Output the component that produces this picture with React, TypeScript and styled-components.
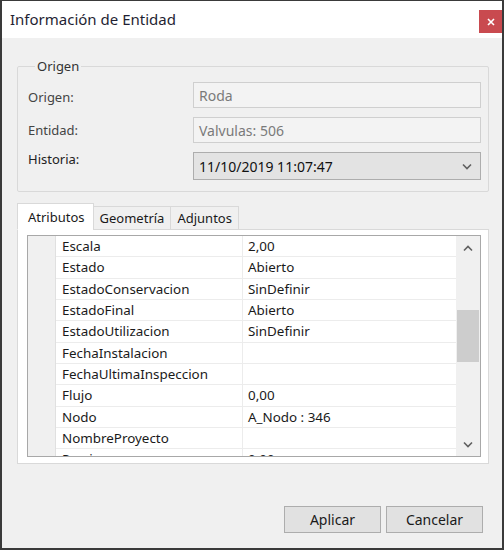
import styled, { createGlobalStyle } from 'styled-components';

const GlobalStyle = createGlobalStyle`
  html, body {
    margin: 0;
    padding: 0;
    background: #ffffff;
  }
  * {
    box-sizing: border-box;
  }
`;

interface Attribute {
  name: string;
  value: string;
}

const attributes: Attribute[] = [
  { name: 'Escala', value: '2,00' },
  { name: 'Estado', value: 'Abierto' },
  { name: 'EstadoConservacion', value: 'SinDefinir' },
  { name: 'EstadoFinal', value: 'Abierto' },
  { name: 'EstadoUtilizacion', value: 'SinDefinir' },
  { name: 'FechaInstalacion', value: '' },
  { name: 'FechaUltimaInspeccion', value: '' },
  { name: 'Flujo', value: '0,00' },
  { name: 'Nodo', value: 'A_Nodo : 346' },
  { name: 'NombreProyecto', value: '' },
  { name: 'Presion', value: '0,00' },
];

const tabs = ['Atributos', 'Geometría', 'Adjuntos'];

function Chevron({ up }: { up?: boolean }) {
  return (
    <svg width="10" height="7" viewBox="0 0 10 7">
      <path
        d={up ? 'M1 5.5 L5 1.5 L9 5.5' : 'M1 1.5 L5 5.5 L9 1.5'}
        fill="none"
        stroke="#606060"
        strokeWidth="1.6"
      />
    </svg>
  );
}

export default function App() {
  return (
    <>
      <GlobalStyle />
      <Window>
        <TitleBar>
          <Title>Información de Entidad</Title>
          <CloseButton>
            <svg width="8" height="8" viewBox="0 0 8 8">
              <path d="M1 1 L7 7 M7 1 L1 7" stroke="#fff" strokeWidth="1.6" />
            </svg>
          </CloseButton>
        </TitleBar>
        <Body>
          <Group>
            <Legend>Origen</Legend>
            <FormGrid>
              <Label $shift={2}>Origen:</Label>
              <TextBox>Roda</TextBox>
              <Label $shift={0}>Entidad:</Label>
              <TextBox>Valvulas: 506</TextBox>
              <Label $shift={-7} $strong>
                Historia:
              </Label>
              <Combo>
                <span>11/10/2019 11:07:47</span>
                <Chevron />
              </Combo>
            </FormGrid>
          </Group>

          <Tabs>
            <TabStrip>
              {tabs.map((t, i) => (
                <Tab key={t} $active={i === 0}>
                  {t}
                </Tab>
              ))}
            </TabStrip>
            <TabPanel>
              <GridView>
                <Rows>
                  {attributes.map((a) => (
                    <Row key={a.name}>
                      <RowHeader />
                      <NameCell>{a.name}</NameCell>
                      <ValueCell>{a.value}</ValueCell>
                    </Row>
                  ))}
                </Rows>
                <ScrollBar>
                  <ScrollArrow>
                    <Chevron up />
                  </ScrollArrow>
                  <ScrollTrack>
                    <Thumb />
                  </ScrollTrack>
                  <ScrollArrow>
                    <Chevron />
                  </ScrollArrow>
                </ScrollBar>
              </GridView>
            </TabPanel>
          </Tabs>

          <Buttons>
            <Button>Aplicar</Button>
            <Button>Cancelar</Button>
          </Buttons>
        </Body>
      </Window>
    </>
  );
}

const Window = styled.div`
  width: 504px;
  height: 550px;
  border: 2px solid #3a3a3a;
  border-top-width: 1px;
  display: flex;
  flex-direction: column;
  font-family: 'Noto Sans', 'Open Sans', sans-serif;
  font-size: 13px;
  color: #1a1a1a;
  overflow: hidden;
`;

const TitleBar = styled.div`
  height: 37px;
  flex-shrink: 0;
  background: #ffffff;
  display: flex;
  align-items: flex-start;
  justify-content: space-between;
`;

const Title = styled.div`
  padding: 8px 0 0 8px;
  font-size: 15px;
  color: #1f1f33;
`;

const CloseButton = styled.div`
  margin-top: 9px;
  width: 23px;
  height: 23px;
  background: #c94a4f;
  display: flex;
  align-items: center;
  justify-content: center;
`;

const Body = styled.div`
  flex: 1;
  background: #f0f0f0;
  display: flex;
  flex-direction: column;
  padding: 20px 13px 15px 15px;
`;

const Group = styled.fieldset`
  margin: 0;
  padding: 8px 7px 11px 10px;
  border: 1px solid #d9d9d9;
  border-radius: 2px;
`;

const Legend = styled.legend`
  padding: 0 2px;
  margin-left: 7px;
  line-height: 16px;
  color: #333;
`;

const FormGrid = styled.div`
  display: grid;
  grid-template-columns: 165px 1fr;
  row-gap: 9px;
  align-items: center;
`;

const Label = styled.div<{ $strong?: boolean; $shift: number }>`
  color: ${(p) => (p.$strong ? '#222' : '#444')};
  margin-top: ${(p) => p.$shift * 2}px;
`;

const TextBox = styled.div`
  height: 26px;
  border: 1px solid #cfcfcf;
  background: #f3f3f3;
  color: #7a7a7a;
  font-size: 14px;
  display: flex;
  align-items: center;
  padding-left: 5px;
`;

const Combo = styled.div`
  height: 28px;
  border: 1px solid #adadad;
  background: #e3e3e3;
  color: #111;
  font-size: 14px;
  display: flex;
  align-items: center;
  justify-content: space-between;
  padding: 0 8px 0 5px;
`;

const Tabs = styled.div`
  margin-top: 10px;
  display: flex;
  flex-direction: column;
`;

const TabStrip = styled.div`
  display: flex;
  align-items: flex-end;
  height: 27px;
  position: relative;
  z-index: 1;
`;

const Tab = styled.div<{ $active?: boolean }>`
  height: ${(p) => (p.$active ? '27px' : '24px')};
  padding: 0 ${(p) => (p.$active ? '8px' : '6px')} 0 ${(p) => (p.$active ? '10px' : '6px')};
  display: flex;
  align-items: center;
  background: ${(p) => (p.$active ? '#ffffff' : '#f0f0f0')};
  border: 1px solid #d9d9d9;
  border-bottom: ${(p) => (p.$active ? '1px solid #ffffff' : '1px solid #d9d9d9')};
  margin-left: ${(p) => (p.$active ? '0' : '-1px')};
  margin-bottom: -1px;
  color: #1a1a1a;
`;

const TabPanel = styled.div`
  height: 235px;
  background: #ffffff;
  border: 1px solid #d9d9d9;
  padding: 5px 7px 6px 9px;
`;

const GridView = styled.div`
  height: 100%;
  border: 1px solid #a8a8a8;
  display: flex;
  overflow: hidden;
`;

const Rows = styled.div`
  flex: 1;
  display: flex;
  flex-direction: column;
  overflow: hidden;
  font-size: 13.4px;
`;

const Row = styled.div`
  flex-shrink: 0;
  height: 21.33px;
  display: grid;
  grid-template-columns: 28px 187px 1fr;
`;

const RowHeader = styled.div`
  background: #f0f0f0;
  border-right: 1px solid #e0e0e0;
`;

const NameCell = styled.div`
  padding-left: 6px;
  line-height: 20px;
  border-bottom: 1px solid #ececec;
  border-right: 1px solid #ececec;
  white-space: nowrap;
`;

const ValueCell = styled.div`
  padding-left: 5px;
  line-height: 20px;
  border-bottom: 1px solid #ececec;
  white-space: nowrap;
`;

const ScrollBar = styled.div`
  width: 24px;
  flex-shrink: 0;
  background: #f0f0f0;
  display: flex;
  flex-direction: column;
`;

const ScrollArrow = styled.div`
  height: 24px;
  display: flex;
  align-items: center;
  justify-content: center;
`;

const ScrollTrack = styled.div`
  flex: 1;
  padding: 50px 1px 0 1px;
`;

const Thumb = styled.div`
  height: 52px;
  background: #cdcdcd;
`;

const Buttons = styled.div`
  margin-top: auto;
  display: flex;
  justify-content: flex-end;
  gap: 5px;
  padding-right: 6px;
`;

const Button = styled.div`
  width: 97px;
  height: 27px;
  background: #e1e1e1;
  border: 1px solid #adadad;
  display: flex;
  align-items: center;
  justify-content: center;
  font-size: 14px;
  color: #1a1a1a;
`;
